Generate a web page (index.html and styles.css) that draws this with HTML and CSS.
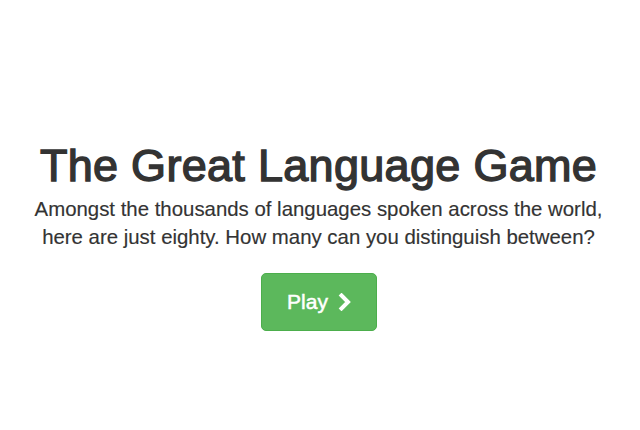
FILE: index.html
```html
<!DOCTYPE html>
<html>
<head>
<meta charset="utf-8">
<link rel="stylesheet" href="styles.css">
</head>
<body>
<main class="hero">
  <h1 class="title">The Great Language Game</h1>
  <p class="lead">Amongst the thousands of languages spoken across the world,<br>here are just eighty. How many can you distinguish between?</p>
  <a class="btn-play" href="#">
    <span class="btn-label">Play</span>
    <svg class="chev" width="14" height="18" viewBox="0 0 14 18" aria-hidden="true">
      <path d="M3.5 2.5 L10 9 L3.5 15.5" fill="none" stroke="#fff" stroke-width="4" stroke-linecap="square" stroke-linejoin="miter"/>
    </svg>
  </a>
</main>
</body>
</html>
```
FILE: styles.css
```css
html, body {
  margin: 0;
  padding: 0;
  background: #fff;
}
.hero {
  display: flex;
  flex-direction: column;
  align-items: center;
  padding-top: 141px;
  padding-right: 3px;
  font-family: "Liberation Sans", Arial, sans-serif;
  color: #333;
  text-align: center;
}
.title {
  margin: 0;
  font-size: 45px;
  line-height: 49px;
  font-weight: normal;
  -webkit-text-stroke: 1.4px #333;
  letter-spacing: 0.3px;
  color: #333;
}
.lead {
  margin: 5px 0 0;
  font-size: 20.4px;
  line-height: 28px;
  color: #333;
  -webkit-text-stroke: 0.15px #333;
}
.btn-play {
  margin-top: 22px;
  display: flex;
  align-items: center;
  justify-content: center;
  gap: 10px;
  width: 116px;
  height: 58px;
  box-sizing: border-box;
  background: #5cb85c;
  border: 1px solid #4cae4c;
  border-radius: 5px;
  color: #fff;
  text-decoration: none;
  font-size: 21px;
  padding-left: 2px;
}
.btn-label {
  -webkit-text-stroke: 0.5px #fff;
}
.chev {
  display: block;
}
```
